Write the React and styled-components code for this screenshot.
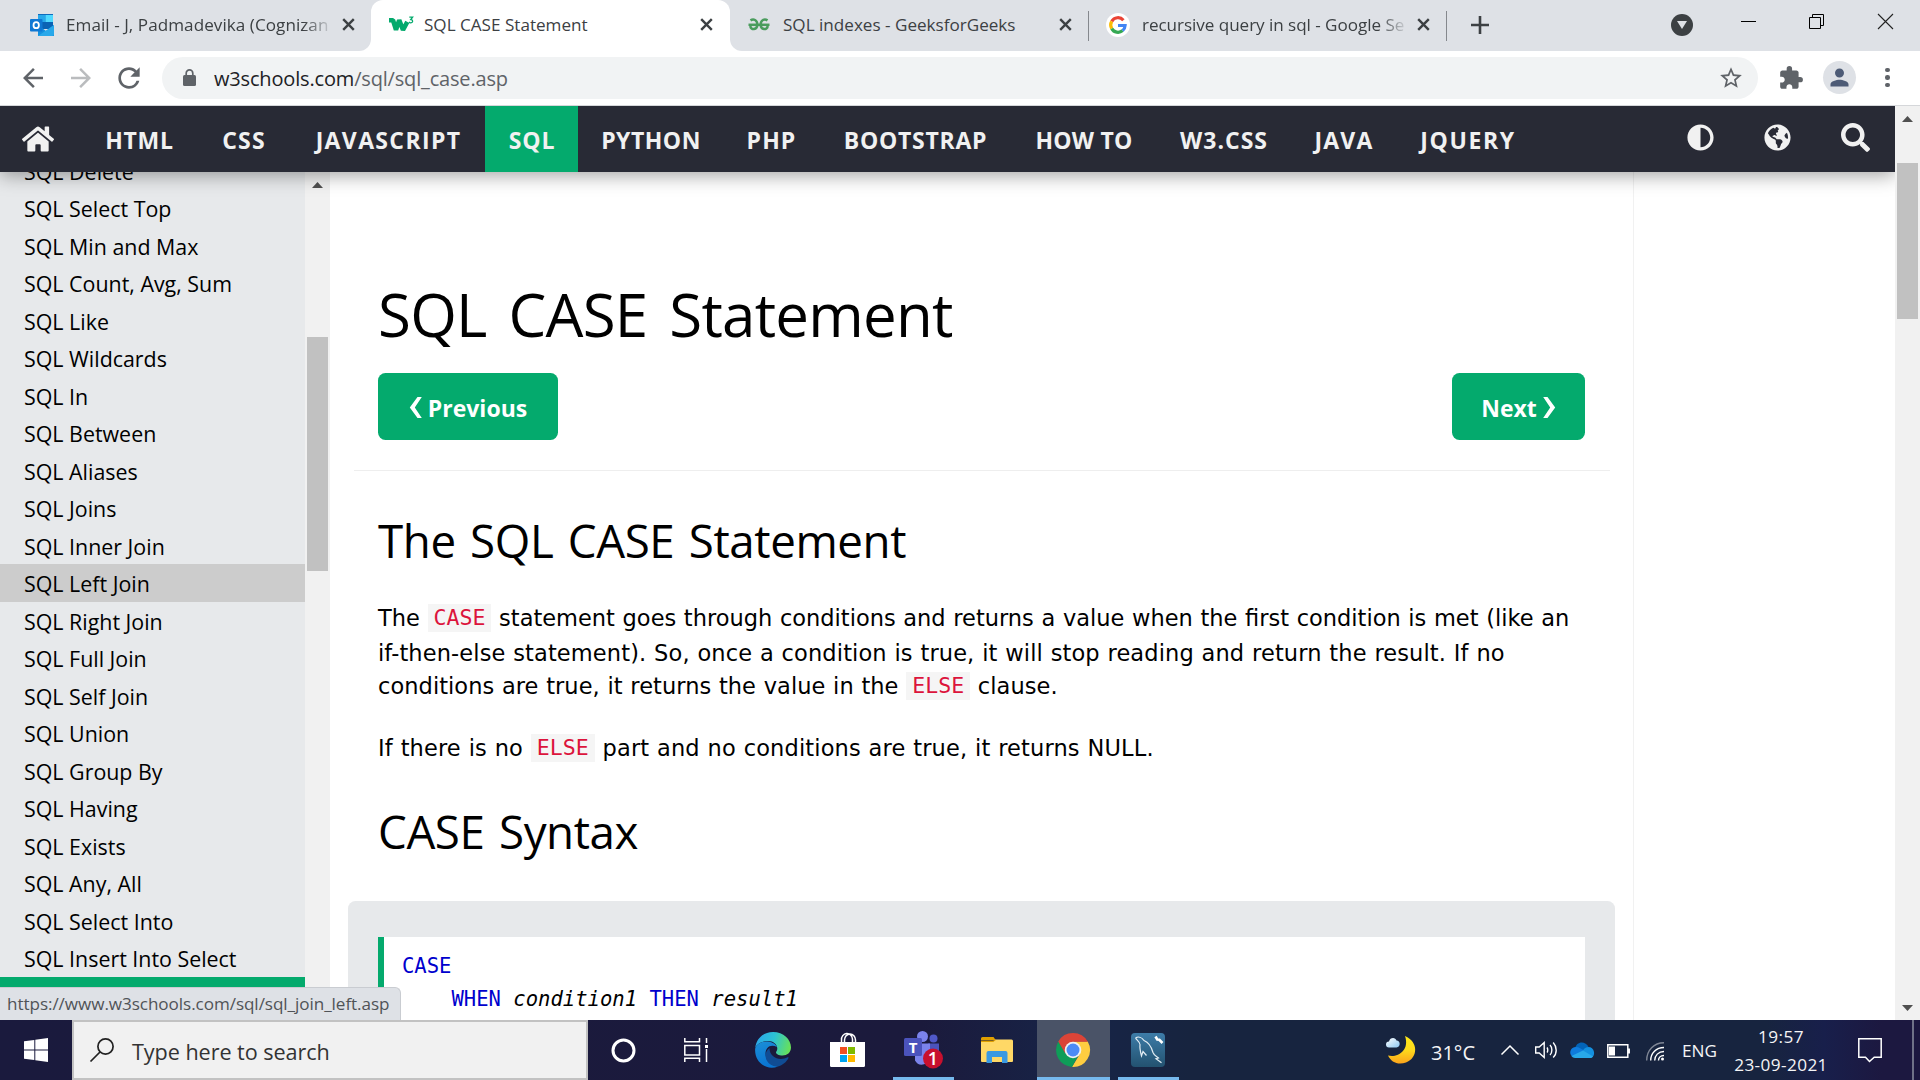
import React from "react";
import styled, { createGlobalStyle } from "styled-components";
import { FaHome, FaAdjust, FaGlobeAmericas, FaSearch } from "react-icons/fa";
import {
  MdArrowBack,
  MdArrowForward,
  MdRefresh,
  MdStarBorder,
  MdExtension,
  MdPerson,
} from "react-icons/md";

const UI = `"Open Sans", "Noto Sans", sans-serif`;
const BODY = `"DejaVu Sans", sans-serif`;
const MONO = `"DejaVu Sans Mono", monospace`;
const GREEN = "#04aa6d";

const Global = createGlobalStyle`
  * { box-sizing: border-box; }
  html, body { margin: 0; padding: 0; background: #fff; overflow: hidden; }
  svg { display: block; flex: none; overflow: visible; }
`;

const Screen = styled.div`
  width: 1920px;
  height: 1080px;
  display: flex;
  flex-direction: column;
  overflow: hidden;
  background: #fff;
  color: #000;
  font-family: ${UI};
`;

/* ---------- tab strip ---------- */

const TabStrip = styled.div`
  flex: none;
  height: 51px;
  display: flex;
  background: #dee1e6;
  color: #3c4043;
`;

const Tab = styled.div`
  flex: none;
  width: ${(p) => p.$w}px;
  padding: 0 ${(p) => p.$pr}px 2px ${(p) => p.$pl}px;
  display: flex;
  align-items: center;
  background: ${(p) => (p.$active ? "#fff" : "#dee1e6")};
  border-radius: ${(p) => (p.$active ? "12px 12px 0 0" : p.$corner)};
`;

const TabBack = styled.div`
  flex: none;
  display: flex;
  background: linear-gradient(#dee1e6 0 50%, #fff 50%);
`;

const TabTitle = styled.div`
  flex: 1;
  margin-left: ${(p) => p.$gap}px;
  overflow: hidden;
  white-space: nowrap;
  font-size: 17.1px;
  line-height: 30px;
  letter-spacing: ${(p) => p.$ls || 0}px;
  ${(p) => p.$fade && "mask-image: linear-gradient(90deg, #000 86%, transparent 97%);"}
`;

const Separator = styled.i`
  flex: none;
  width: 1px;
  height: 30px;
  margin-top: 11px;
  background: #85888d;
`;

const NewTab = styled.div`
  flex: 1;
  padding: 0 27px 2px 24px;
  display: flex;
  align-items: center;
`;

const WindowButtons = styled.div`
  margin-left: auto;
  display: flex;
  align-items: center;
`;

const MenuDisc = styled.div`
  width: 22px;
  height: 22px;
  margin-right: 48px;
  border-radius: 50%;
  background: #3c4043;
  display: grid;
  place-items: center;
`;

const WindowGlyph = styled.div`
  margin: 0 ${(p) => p.$mr || 0}px 7px 0;
`;

/* ---------- address bar ---------- */

const Toolbar = styled.div`
  flex: none;
  height: 55px;
  display: flex;
  align-items: center;
  padding: 0 20px 1px 18px;
  border-bottom: 1px solid #d5d7da;
  background: #fff;
  color: #5f6368;
`;

const ToolGlyph = styled.div`
  flex: none;
  margin-right: ${(p) => p.$mr || 0}px;
  color: ${(p) => p.$color || "#5f6368"};
`;

const Omnibox = styled.div`
  flex: none;
  width: 1596px;
  height: 42px;
  margin-right: 20px;
  padding: 0 14px 0 21px;
  display: flex;
  align-items: center;
  border-radius: 21px;
  background: #f1f3f4;
`;

const Url = styled.div`
  flex: 1;
  margin-left: 18px;
  padding-top: 1px;
  font-size: 20px;
  letter-spacing: ${(p) => p.$ls || 0}px;
  white-space: nowrap;
  b { font-weight: 400; color: #202124; }
`;

const Avatar = styled.div`
  width: 33px;
  height: 33px;
  margin-right: 29px;
  border-radius: 50%;
  background: #dee1e6;
  color: #4d5b76;
  display: grid;
  place-items: center;
`;

const Dots = styled.div`
  display: grid;
  gap: 3px;
  i { width: 4.5px; height: 4.5px; border-radius: 50%; background: #5f6368; }
`;

/* ---------- page ---------- */

const Page = styled.div`
  flex: none;
  height: 914px;
  display: flex;
  position: relative;
  overflow: hidden;
`;

const Site = styled.div`
  flex: none;
  width: 1895px;
  display: flex;
  flex-direction: column;
  overflow: hidden;
`;

const NavBar = styled.nav`
  flex: none;
  position: relative;
  z-index: 1;
  height: 66px;
  display: flex;
  background: #282a35;
  color: #f1f1f1;
  box-shadow: 0 3px 18px rgba(0, 0, 0, 0.38);
`;

const NavHome = styled.div`
  flex: none;
  width: 82px;
  display: flex;
  align-items: center;
  padding: 0 0 0 22px;
`;

const NavItem = styled.div`
  flex: none;
  width: ${(p) => p.$w}px;
  padding: 1px 0 0 1px;
  display: flex;
  align-items: center;
  justify-content: center;
  background: ${(p) => (p.$active ? GREEN : "transparent")};
  font-size: 23px;
  font-weight: 700;
  letter-spacing: ${(p) => p.$ls}px;
  white-space: nowrap;
`;

const NavTools = styled.div`
  margin-left: auto;
  padding: 0 25px 3px 0;
  display: flex;
  align-items: center;
  gap: 50px;
`;

const Columns = styled.div`
  flex: 1;
  min-height: 0;
  display: flex;
`;

const Sidebar = styled.aside`
  flex: none;
  width: 305px;
  overflow: hidden;
  background: #e7e9eb;
`;

const SideList = styled.div`
  margin-top: -20.5px;
`;

const SideLink = styled.div`
  height: 37.5px;
  padding: 1px 0 0 24px;
  font-size: 21.4px;
  line-height: 37.5px;
  white-space: nowrap;
  background: ${(p) => (p.$hover ? "#cccccc" : "transparent")};
`;

const SideFooter = styled.div`
  height: 48px;
  background: ${GREEN};
`;

const ScrollTrack = styled.div`
  flex: none;
  width: 25px;
  display: flex;
  flex-direction: column;
  align-items: center;
  padding: ${(p) => p.$pad};
  background: #f1f1f1;
`;

const Thumb = styled.div`
  width: 21px;
  height: ${(p) => p.$h}px;
  margin-top: ${(p) => p.$mt}px;
  margin-bottom: auto;
  background: #c1c1c1;
`;

const Article = styled.main`
  flex: none;
  width: 1304px;
  padding: 102px 48px 0;
  border-right: 1px solid #f1f1f1;
  overflow: hidden;
`;

const Title = styled.h1`
  margin: 0 0 19px;
  font-size: 60px;
  font-weight: 400;
  line-height: 80px;
  letter-spacing: -0.75px;
  word-spacing: 7px;
  white-space: nowrap;
`;

const Heading = styled.h2`
  margin: ${(p) => p.$mt}px 0 ${(p) => p.$mb}px;
  font-size: 45.7px;
  font-weight: 400;
  line-height: 60px;
  letter-spacing: -0.4px;
  word-spacing: 3px;
  white-space: nowrap;
`;

const Pager = styled.div`
  display: flex;
  justify-content: space-between;
`;

const PagerButton = styled.div`
  width: ${(p) => p.$w}px;
  height: 67px;
  padding-top: 2px;
  display: flex;
  align-items: center;
  justify-content: center;
  gap: 6px;
  border-radius: 7.5px;
  background: ${GREEN};
  color: #fff;
  font-size: 23px;
  font-weight: 700;
`;

const Rule = styled.hr`
  height: 1px;
  margin: 30px -25px 0 -24px;
  border: 0;
  background: #eeeeee;
`;

const Line = styled.div`
  height: ${(p) => p.$h}px;
  margin-top: ${(p) => p.$mt || 0}px;
  display: flex;
  align-items: center;
  white-space: pre;
  font-family: ${BODY};
  font-size: 22.5px;
  letter-spacing: ${(p) => p.$ls || 0}px;
  word-spacing: 0.5px;
`;

const Crimson = styled.code`
  height: 28px;
  padding: 0 6px;
  background: #f5f5f5;
  color: #dc143c;
  font-family: ${MONO};
  font-size: 21.57px;
  line-height: 28px;
  letter-spacing: 0;
`;

const Example = styled.div`
  margin: 0 -30px;
  height: 160px;
  padding: 36px 30px 0;
  border-radius: 7.5px;
  background: #e7e9eb;
`;

const CodeBox = styled.pre`
  height: 160px;
  margin: 0;
  padding: 13px 18px;
  border-left: 6px solid ${GREEN};
  background: #fff;
  font-family: ${MONO};
  font-size: 20.56px;
  line-height: 33.4px;
  b { font-weight: 400; color: #0000cd; }
`;

const StatusBubble = styled.div`
  position: absolute;
  z-index: 2;
  left: 0;
  bottom: 0;
  width: 401px;
  height: 33px;
  padding: 0 0 0 7px;
  border: solid #c9ccd1;
  border-width: 1px 1px 0 0;
  border-radius: 0 6px 0 0;
  background: #dee1e6;
  color: #505357;
  font-size: 17.1px;
  line-height: 32px;
  letter-spacing: -0.06px;
  white-space: nowrap;
`;

/* ---------- taskbar ---------- */

const Taskbar = styled.div`
  flex: none;
  height: 60px;
  display: flex;
  background: linear-gradient(90deg, #1a1a3d 0, #1b1a3c 48%, #172447 56%, #17243f 62%, #17243f 92%, #181f4b 95%, #1c1840 98%);
  color: #f4f4f6;
`;

const Start = styled.div`
  flex: none;
  width: 72px;
  display: grid;
  place-items: center;
`;

const SearchBox = styled.div`
  flex: none;
  width: 516px;
  display: flex;
  align-items: center;
  padding-left: 16px;
  border: 2px solid #c2c2c2;
  background: #f1f1f1;
  color: #333;
  font-size: 21.6px;
  letter-spacing: -0.05px;
  white-space: nowrap;
`;

const SearchHint = styled.span`
  margin: 2px 0 0 18px;
`;

const AppButton = styled.div`
  flex: none;
  width: ${(p) => p.$w}px;
  margin-left: ${(p) => p.$ml || 0}px;
  padding: ${(p) => (p.$running ? 3 : 0)}px ${(p) => p.$pr || 0}px 0 0;
  display: flex;
  align-items: center;
  justify-content: center;
  background: ${(p) => (p.$active ? "#4a5367" : "transparent")};
  border-bottom: ${(p) => (p.$running ? "3px solid #76b9ed" : "0")};
`;

const Tray = styled.div`
  margin-left: auto;
  display: flex;
  align-items: center;
`;

const TraySlot = styled.div`
  flex: none;
  width: ${(p) => p.$w}px;
  padding-top: ${(p) => p.$pt || 0}px;
  display: flex;
  font-size: ${(p) => p.$fs || 18}px;
  white-space: nowrap;
`;

const Clock = styled.div`
  flex: none;
  width: 114px;
  margin-right: 20px;
  padding-top: 2px;
  text-align: center;
  font-size: 17.2px;
  line-height: 28px;
  letter-spacing: 0.4px;
`;

const ShowDesktop = styled.div`
  width: 8px;
  height: 60px;
  border-left: 2px solid #6f7288;
`;

/* ---------- drawings ---------- */

const CloseX = () => (
  <svg width="13" height="13" viewBox="0 0 13 13" stroke="#3c4043" strokeWidth="2.4">
    <path d="M1.2 1.2 11.8 11.8M11.8 1.2 1.2 11.8" />
  </svg>
);

const LockIcon = () => (
  <svg width="13" height="17" viewBox="0 0 13 17">
    <path d="M3.200 7V4.200a3.300 3.300 0 0 1 6.600 0V7" fill="none" stroke="#5f6368" strokeWidth="1.700" />
    <rect x="0" y="6" width="13" height="11" rx="1.500" fill="#5f6368" />
  </svg>
);

const OutlookIcon = () => (
  <svg width="24" height="22" viewBox="0 0 24 22">
    <path d="M8 0h15v9H8z" fill="#0f6cbd" />
    <path d="M8 1h7.500v7H8z" fill="#28a8ea" />
    <path d="M15.500 1H23v7h-7.500z" fill="#50d9ff" />
    <path d="M8 8h15v7H8z" fill="#0a63b5" />
    <path d="M8 11l8 6 8-6v11H8z" fill="#1490df" />
    <path d="M8 22l16-11v9a2 2 0 0 1-2 2z" fill="#28a8ea" />
    <rect x="0" y="5" width="12.500" height="12.500" rx="1" fill="#0f78d4" />
    <ellipse cx="6.200" cy="11.200" rx="2.700" ry="3" fill="none" stroke="#fff" strokeWidth="1.800" />
  </svg>
);

const W3Icon = () => (
  <svg width="25" height="18" viewBox="0 0 25 18" fill="none" stroke={GREEN}>
    <path d="M0 4.200h4l3 9.600 3.200-9.600 3.800 9.600 4.300-8" strokeWidth="4.600" strokeLinejoin="bevel" />
    <path d="M20.300 1.200h3.300l-1.800 2.300c2.600.2 2.400 3.400-.1 3.300-.8 0-1.300-.3-1.700-.8" strokeWidth="1.300" />
  </svg>
);

const GeeksIcon = () => (
  <svg width="22" height="13" viewBox="0 0 22 13" fill="none" stroke="#4a9c5d" strokeWidth="2.500">
    <path d="M.5 6.800h21" />
    <path d="M2.500 2.400C5.500.4 9.300 2 9.300 6.500c0 5.500-6.500 6-7 1.500M19.500 2.400c-3-2-6.800-.4-6.800 4.100 0 5.500 6.500 6 7 1.500" />
  </svg>
);

const GoogleIcon = () => (
  <svg width="24" height="24" viewBox="0 0 24 24" fill="none" strokeWidth="3.200">
    <circle cx="12" cy="12" r="12" fill="#fff" />
    <path d="M17.400 7.200A7.200 7.200 0 0 0 5.700 8.400" stroke="#ea4335" />
    <path d="M5.700 8.400a7.200 7.200 0 0 0 0 7.200" stroke="#fbbc05" />
    <path d="M5.700 15.600a7.200 7.200 0 0 0 10.900 2" stroke="#34a853" />
    <path d="M16.600 17.600a7.200 7.200 0 0 0 2.500-5.100H12" stroke="#4285f4" />
  </svg>
);

const Arrow = ({ down }) => (
  <svg width="11" height="6" viewBox="0 0 11 6" fill="#505050">
    <path d={down ? "M0 0h11L5.500 6z" : "M0 6h11L5.500 0z"} />
  </svg>
);

const Chevron = ({ right }) => (
  <svg width="13" height="21" viewBox="0 0 13 21" fill="#fff">
    <path
      d="M8.500 0h4.300L5.800 10.500l7 10.500H8.500L.8 10.500z"
      transform={right ? "translate(13 0) scale(-1 1)" : undefined}
    />
  </svg>
);

const TaskView = () => (
  <svg width="24" height="24" viewBox="0 0 24 24" fill="none" stroke="#fff" strokeWidth="1.500">
    <path d="M.8 0v3.700h14.700V0M.8 24v-3.700h14.700V24M.8 7.500h14.700v9.500H.8zM22.500 0v5M22.500 11v13" />
    <rect x="21" y="7" width="3" height="3" fill="#fff" stroke="none" />
  </svg>
);

const EdgeIcon = () => (
  <svg width="36" height="36" viewBox="0 0 36 36">
    <defs>
      <linearGradient id="edgeTop" x1="0" y1="0.300" x2="1" y2="0.500">
        <stop offset="0" stopColor="#2ba6ea" />
        <stop offset="0.500" stopColor="#2cc3d4" />
        <stop offset="1" stopColor="#67e05a" />
      </linearGradient>
      <linearGradient id="edgeLow" x1="0" y1="0" x2="0.300" y2="1">
        <stop offset="0" stopColor="#1b8fd8" />
        <stop offset="1" stopColor="#0a74d1" />
      </linearGradient>
    </defs>
    <path d="M.3 16C1 6.500 8.500 0 18 0c10.500 0 18 7.500 18 15.500 0 5-4 8-8.500 8-4 0-6.500-1.500-6.500-3 0-1 1.300-1.500 1.300-4 0-4-4-7.500-9-7.500C7 9 1.500 12 .3 16z" fill="url(#edgeTop)" />
    <path d="M.2 16.500C1.500 12 6.500 9.500 11.500 9.500c5.500 0 9.500 2.500 10.500 5.500-6.500-3.500-11.500.5-11.500 6.500 0 7 5.500 12.500 12.500 13-12 4.500-24-4.500-22.800-18z" fill="url(#edgeLow)" />
    <path d="M14.500 16c-2 1.500-4 4-4 7.500 0 6 5.500 11.500 12.500 11 4.500-1.200 8.500-4.500 10.500-8.500.3-.8-.3-1-1-.7-8 4-18 .2-18-9.300z" fill="#104c94" />
  </svg>
);

const StoreIcon = () => (
  <svg width="35" height="34" viewBox="0 0 35 34">
    <path d="M11.500 10V7a5.500 6 0 0 1 11-1v4M14.500 10V7a5.500 6 0 0 1 11 0v3" fill="none" stroke="#fff" strokeWidth="1.500" />
    <path d="M0 9h35v23.500a1.500 1.500 0 0 1-1.500 1.500h-32A1.500 1.500 0 0 1 0 32.500z" fill="#fff" />
    <path d="M10 14h7v7h-7z" fill="#f25022" />
    <path d="M18 14h7v7h-7z" fill="#7fba00" />
    <path d="M10 22h7v7h-7z" fill="#00a4ef" />
    <path d="M18 22h7v7h-7z" fill="#ffb900" />
  </svg>
);

const TeamsIcon = () => (
  <svg width="39" height="38" viewBox="0 0 39 38">
    <circle cx="29.500" cy="7.500" r="4" fill="#5059c9" />
    <path d="M24 12.500h11v11a6 6 0 0 1-11 2z" fill="#4b53bc" />
    <circle cx="18.500" cy="5.500" r="5.500" fill="#7b83eb" />
    <path d="M11 12.500h15v13a8 8 0 0 1-15 4z" fill="#7b83eb" />
    <rect x="0" y="7" width="18" height="18" rx="1.500" fill="#4b53bc" />
    <text x="9" y="21.500" textAnchor="middle" fill="#fff" fontFamily={UI} fontWeight="700" fontSize="15">T</text>
    <circle cx="29" cy="27.500" r="10" fill="#c8102e" />
    <text x="29" y="34" textAnchor="middle" fill="#fff" fontFamily={UI} fontWeight="600" fontSize="18">1</text>
  </svg>
);

const FolderIcon = () => (
  <svg width="32" height="27" viewBox="0 0 32 27">
    <path d="M0 1.500A1.500 1.500 0 0 1 1.500 0h11L15 3.500H0z" fill="#e09f00" />
    <path d="M0 4.500h12l2.500-2H30.500A1.500 1.500 0 0 1 32 4v20a1 1 0 0 1-1 1H1a1 1 0 0 1-1-1z" fill="#ffd866" />
    <path d="M0 4.500h12l2.500-1.500" fill="none" stroke="#e09f00" strokeWidth="1" />
    <path d="M5.500 26V16a2 2 0 0 1 2-2h17a2 2 0 0 1 2 2v10h-5.500v-6H11v6z" fill="#3a99e2" />
  </svg>
);

const ChromeIcon = () => (
  <svg width="34" height="34" viewBox="0 0 34 34">
    <path d="M31.700 8.500A17 17 0 0 1 16 34L23.900 21 17 8.500z" fill="#ffcd40" />
    <path d="M2.300 8.500 10.100 21 17 24l6-3-7 13A17 17 0 0 1 2.300 8.500z" fill="#0f9d58" />
    <path d="M17 8.700h14.800A17 17 0 0 0 2.300 8.500L9 20z" fill="#db4437" />
    <circle cx="17" cy="17" r="8.300" fill="#f1f1f1" />
    <circle cx="17" cy="17" r="6.500" fill="#4c8bf5" />
  </svg>
);

const MySqlIcon = () => (
  <svg width="34" height="34" viewBox="0 0 34 34">
    <defs>
      <linearGradient id="wb" x1="0" y1="0" x2="0" y2="1">
        <stop offset="0" stopColor="#3d7ca8" />
        <stop offset="1" stopColor="#235270" />
      </linearGradient>
    </defs>
    <rect width="34" height="34" rx="4" fill="url(#wb)" />
    <path d="M4.500 5c3-1.800 6.500-.5 8.500 2.500 5 2 7.500 6.500 9 12 1 3 4 4 5.500 5.500l-2.500.7 5.500 4M4.500 5c1 2 4 3.500 4.500 6.500-.5 4 .3 7 1.500 11.500l1.500-4.500 3.500 4" fill="none" stroke="#e3edf4" strokeWidth="1.200" />
    <path d="M24.500 3.500l1.800 3 2 .3L31.500 10" stroke="#fff" strokeWidth="2.600" fill="none" />
  </svg>
);

const MoonIcon = () => (
  <svg width="30" height="28" viewBox="0 0 30 28">
    <defs>
      <linearGradient id="moon" x1="0" y1="0" x2="0" y2="1">
        <stop offset="0" stopColor="#ffe81a" />
        <stop offset="0.500" stopColor="#fdda1c" />
        <stop offset="1" stopColor="#fba31c" />
      </linearGradient>
      <linearGradient id="cloud" x1="0" y1="0" x2="1" y2="1">
        <stop offset="0" stopColor="#fff" />
        <stop offset="1" stopColor="#8cc8f4" />
      </linearGradient>
    </defs>
    <path d="M19 0c14 6 13 22 1 26.500C12 29.500 5 26 2 19.500 11 22 24 15 19 0z" fill="url(#moon)" />
    <path d="M3 11.500a3 3 0 0 1 0-6C4 1 9.500 1 10.500 4.500c4 0 4.500 6.500 0 7z" fill="url(#cloud)" />
  </svg>
);

const SpeakerIcon = () => (
  <svg width="22" height="18" viewBox="0 0 22 18" fill="none" stroke="#fff" strokeWidth="1.400">
    <path d="M.7 6v6h3.500l5 4.500v-15L4.200 6zM12 6.500c1 1.200 1 4 0 5M15 4c2.500 2.500 2.500 7.500 0 10M18.200 1.500c4 4.500 4 11 0 15" />
  </svg>
);

const CloudIcon = () => (
  <svg width="24" height="16" viewBox="0 0 24 16">
    <path d="M5 7C6-1 15.500-1.500 18.500 5L12 11z" fill="#0364b8" />
    <path d="M2 14.500C-1.500 11 .5 5 6 5c3 0 5 2 9 4l-8 6z" fill="#0f7bdc" />
    <path d="M13 8.500c2-4.500 10-5 11 1.500.5 4-2 6-4 6l-8-4z" fill="#1490df" />
    <path d="M1.500 14 13 8.500l10 6c-1 1-2 1.500-3.500 1.500H5c-1.500 0-2.700-.7-3.500-2z" fill="#28a8ea" />
  </svg>
);

const BatteryIcon = () => (
  <svg width="23" height="14" viewBox="0 0 23 14">
    <path d="M.8.800h20v12.400H.8zM22.200 4.500v5" fill="none" stroke="#fff" strokeWidth="1.500" />
    <path d="M2 2.500h6v9H2z" fill="#fff" />
  </svg>
);

const WifiIcon = () => (
  <svg width="18" height="19" viewBox="0 0 18 19" fill="none" stroke="#fff" strokeWidth="1.400">
    <path d="M.7 18.500C.7 8 8 .8 18 .8" opacity="0.450" />
    <path d="M4.700 18.500c0-7.500 5.500-13 13.300-13M8.700 18.500c0-5 3.800-9 9.300-9M12.500 18.500c0-2.500 2-5 5.500-5" />
    <circle cx="16.500" cy="17" r="1.500" fill="#fff" stroke="none" />
  </svg>
);

/* ---------- data ---------- */

const NAV = [
  ["HTML", 114, 0.7],
  ["CSS", 95, 1.2],
  ["JAVASCRIPT", 194, 1.35],
  ["SQL", 93, 0.8],
  ["PYTHON", 145, 0.5],
  ["PHP", 96, 1.1],
  ["BOOTSTRAP", 192, 0.75],
  ["HOW TO", 145, 0.2],
  ["W3.CSS", 135, 1],
  ["JAVA", 105, 1.2],
  ["JQUERY", 143, 1.6],
];

const LINKS = [
  "Delete",
  "Select Top",
  "Min and Max",
  "Count, Avg, Sum",
  "Like",
  "Wildcards",
  "In",
  "Between",
  "Aliases",
  "Joins",
  "Inner Join",
  "Left Join",
  "Right Join",
  "Full Join",
  "Self Join",
  "Union",
  "Group By",
  "Having",
  "Exists",
  "Any, All",
  "Select Into",
  "Insert Into Select",
];

export default function App() {
  return (
    <Screen>
      <Global />
      <TabStrip>
        <TabBack>
          <Tab $w={371} $pl={30} $pr={16} $corner="0 0 12px 0">
            <OutlookIcon />
            <TabTitle $gap={12} $ls={0.05} $fade>Email - J, Padmadevika (Cognizan</TabTitle>
            <CloseX />
          </Tab>
        </TabBack>
        <Tab $w={359} $pl={18} $pr={17} $active>
          <W3Icon />
          <TabTitle $gap={10}>SQL CASE Statement</TabTitle>
          <CloseX />
        </Tab>
        <TabBack>
          <Tab $w={358} $pl={18} $pr={16} $corner="0 0 0 12px">
            <GeeksIcon />
            <TabTitle $gap={13}>SQL indexes - GeeksforGeeks</TabTitle>
            <CloseX />
          </Tab>
        </TabBack>
        <Separator />
        <Tab $w={357} $pl={17} $pr={16} $corner="0">
          <GoogleIcon />
          <TabTitle $gap={12} $ls={-0.05} $fade>recursive query in sql - Google Se</TabTitle>
          <CloseX />
        </Tab>
        <Separator />
        <NewTab>
          <svg width="18" height="18" viewBox="0 0 18 18" stroke="#3c4043" strokeWidth="2.600">
            <path d="M9 0v18M0 9h18" />
          </svg>
          <WindowButtons>
            <MenuDisc>
              <svg width="10" height="8" viewBox="0 0 10 8" fill="#dee1e6">
                <path d="M0 0h10L5 8z" />
              </svg>
            </MenuDisc>
            <WindowGlyph $mr={53}>
              <svg width="15" height="15" stroke="#000">
                <path d="M0 7.500h15" />
              </svg>
            </WindowGlyph>
            <WindowGlyph $mr={54}>
              <svg width="15" height="15" fill="none" stroke="#000">
                <path d="M.5 3.500h11v11H.5zM3.500 3.500v-3h11v11h-3" />
              </svg>
            </WindowGlyph>
            <WindowGlyph>
              <svg width="15" height="15" stroke="#222" strokeWidth="1.100">
                <path d="M0 0l15 15M15 0 0 15" />
              </svg>
            </WindowGlyph>
          </WindowButtons>
        </NewTab>
      </TabStrip>

      <Toolbar>
        <ToolGlyph $mr={18}><MdArrowBack size={30} /></ToolGlyph>
        <ToolGlyph $mr={17} $color="#babcbe"><MdArrowForward size={30} /></ToolGlyph>
        <ToolGlyph $mr={17}><MdRefresh size={32} /></ToolGlyph>
        <Omnibox>
          <LockIcon />
          <Url $ls={-0.17}><b>w3schools.com</b>/sql/sql_case.asp</Url>
          <MdStarBorder size={26} />
        </Omnibox>
        <ToolGlyph $mr={19}><MdExtension size={26} /></ToolGlyph>
        <Avatar><MdPerson size={27} /></Avatar>
        <Dots><i /><i /><i /></Dots>
      </Toolbar>

      <Page>
        <Site>
          <NavBar>
            <NavHome><FaHome size={32} /></NavHome>
            {NAV.map(([name, w, ls]) => (
              <NavItem key={name} $w={w} $ls={ls} $active={name === "SQL"}>{name}</NavItem>
            ))}
            <NavTools>
              <FaAdjust size={27} />
              <FaGlobeAmericas size={27} />
              <FaSearch size={29} />
            </NavTools>
          </NavBar>
          <Columns>
            <Sidebar>
              <SideList>
                {LINKS.map((name) => (
                  <SideLink key={name} $hover={name === "Left Join"}>SQL {name}</SideLink>
                ))}
                <SideFooter />
              </SideList>
            </Sidebar>
            <ScrollTrack $pad="10px 0 0">
              <Arrow />
              <Thumb $h={234} $mt={149} />
            </ScrollTrack>
            <Article>
              <Title>SQL CASE Statement</Title>
              <Pager>
                <PagerButton $w={180}><Chevron />Previous</PagerButton>
                <PagerButton $w={133}>Next<Chevron right /></PagerButton>
              </Pager>
              <Rule />
              <Heading $mt={39} $mb={31}>The SQL CASE Statement</Heading>
              <Line $h={34}>{"The "}<Crimson>CASE</Crimson>{" statement goes through conditions and returns a value when the first condition is met (like an"}</Line>
              <Line $h={34} $mt={1} $ls={0.12}>if-then-else statement). So, once a condition is true, it will stop reading and return the result. If no</Line>
              <Line $h={32} $ls={0.05}>{"conditions are true, it returns the value in the "}<Crimson>ELSE</Crimson>{" clause."}</Line>
              <Line $h={34} $mt={29} $ls={0.14}>{"If there is no "}<Crimson>ELSE</Crimson>{" part and no conditions are true, it returns NULL."}</Line>
              <Heading $mt={36} $mb={40}>CASE Syntax</Heading>
              <Example>
                <CodeBox>
                  <b>CASE</b>{"\n    "}<b>WHEN</b> <i>condition1</i> <b>THEN</b> <i>result1</i>
                </CodeBox>
              </Example>
            </Article>
          </Columns>
        </Site>
        <ScrollTrack $pad="10px 0 9px">
          <Arrow />
          <Thumb $h={156} $mt={41} />
          <Arrow down />
        </ScrollTrack>
        <StatusBubble>https://www.w3schools.com/sql/sql_join_left.asp</StatusBubble>
      </Page>

      <Taskbar>
        <Start>
          <svg width="24" height="24" viewBox="0 0 24 24" fill="#fff">
            <path d="M0 3.200 10.300 1.900v9.500H0zM11.300 1.700 24 0v11.400H11.300zM0 12.400h10.300v9.600L0 20.800zM11.300 12.400H24V24l-12.700-1.800z" />
          </svg>
        </Start>
        <SearchBox>
          <svg width="24" height="24" viewBox="0 0 24 24" fill="none" stroke="#222" strokeWidth="1.700">
            <circle cx="15.500" cy="8.500" r="7.600" />
            <path d="M10 14 .5 23.500" />
          </svg>
          <SearchHint>Type here to search</SearchHint>
        </SearchBox>
        <AppButton $w={72} $pr={1}>
          <svg width="25" height="25" viewBox="0 0 25 25" fill="none" stroke="#fff" strokeWidth="3">
            <circle cx="12.500" cy="12.500" r="10.500" />
          </svg>
        </AppButton>
        <AppButton $w={73} $pr={2}><TaskView /></AppButton>
        <AppButton $w={80}><EdgeIcon /></AppButton>
        <AppButton $w={70} $pr={2}><StoreIcon /></AppButton>
        <AppButton $w={61} $ml={10} $running><TeamsIcon /></AppButton>
        <AppButton $w={80} $ml={3}><FolderIcon /></AppButton>
        <AppButton $w={73} $pr={2} $running $active><ChromeIcon /></AppButton>
        <AppButton $w={61} $ml={8} $pr={1} $running><MySqlIcon /></AppButton>
        <Tray>
          <TraySlot $w={45}><MoonIcon /></TraySlot>
          <TraySlot $w={70} $fs={20} $pt={4}>31°C</TraySlot>
          <TraySlot $w={34}>
            <svg width="18" height="10" viewBox="0 0 18 10" fill="none" stroke="#fff" strokeWidth="1.500">
              <path d="M.5 9.500 9 1l8.500 8.500" />
            </svg>
          </TraySlot>
          <TraySlot $w={35}><SpeakerIcon /></TraySlot>
          <TraySlot $w={37}><CloudIcon /></TraySlot>
          <TraySlot $w={39} $pt={2}><BatteryIcon /></TraySlot>
          <TraySlot $w={36} $pt={3}><WifiIcon /></TraySlot>
          <TraySlot $w={42} $fs={17.2}>ENG</TraySlot>
          <Clock>19:57<br />23-09-2021</Clock>
          <TraySlot $w={54}>
            <svg width="24" height="24" viewBox="0 0 24 24" fill="none" stroke="#fff" strokeWidth="1.500">
              <path d="M.8.800h22.400v18.400h-7L11.500 23.500 7.500 19.200H.8z" />
            </svg>
          </TraySlot>
          <ShowDesktop />
        </Tray>
      </Taskbar>
    </Screen>
  );
}
